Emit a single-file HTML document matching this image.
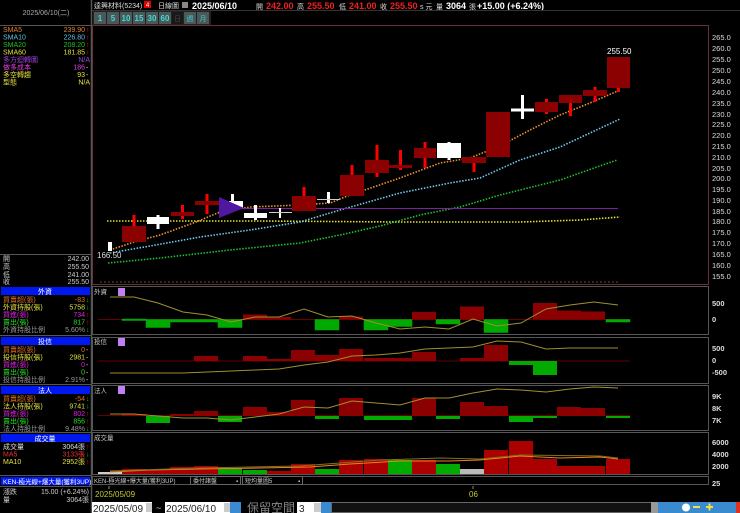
<!DOCTYPE html>
<html><head><meta charset="utf-8"><style>
html,body{margin:0;padding:0;background:#000;width:740px;height:513px;overflow:hidden}
svg{display:block}
text{font-family:"Liberation Sans","Noto Sans CJK TC",sans-serif}
.s{font-size:7px}
.m{font-size:8px;font-weight:bold}
</style></head><body>
<svg width="740" height="513" viewBox="0 0 740 513" xmlns="http://www.w3.org/2000/svg">
<rect width="740" height="513" fill="#000"/>
<!-- left panel borders -->
<line x1="91.5" y1="0" x2="91.5" y2="513" stroke="#555" stroke-width="1.5"/>
<line x1="0" y1="25.5" x2="91" y2="25.5" stroke="#555"/>
<text x="46" y="15" class="s" fill="#aaa" text-anchor="middle">2025/06/10(二)</text>
<g class="s">
<text x="3" y="32" fill="#e08030">SMA5</text><text x="85" y="32" fill="#e08030" text-anchor="end">239.90</text><text x="86" y="32" fill="#f00">↑</text>
<text x="3" y="39.5" fill="#60c0e0">SMA10</text><text x="85" y="39.5" fill="#60c0e0" text-anchor="end">226.80</text><text x="86" y="39.5" fill="#f00">↑</text>
<text x="3" y="47" fill="#20c020">SMA20</text><text x="85" y="47" fill="#20c020" text-anchor="end">208.20</text><text x="86" y="47" fill="#f00">↑</text>
<text x="3" y="54.5" fill="#e0e040">SMA60</text><text x="85" y="54.5" fill="#e0e040" text-anchor="end">181.85</text><text x="86" y="54.5" fill="#f00">↑</text>
<text x="3" y="62" fill="#a040e0">多方迴轉圖</text><text x="90" y="62" fill="#a040e0" text-anchor="end">N/A</text>
<text x="3" y="69.5" fill="#e040e0">做多成本</text><text x="85" y="69.5" fill="#e040e0" text-anchor="end">186</text><text x="86" y="69.5" fill="#ccc">-</text>
<text x="3" y="77" fill="#e0e040">多空轉趨</text><text x="85" y="77" fill="#e0e040" text-anchor="end">93</text><text x="86" y="77" fill="#ccc">-</text>
<text x="3" y="84.5" fill="#e0e040">型態</text><text x="90" y="84.5" fill="#e0e040" text-anchor="end">N/A</text>
</g>
<line x1="0" y1="254.5" x2="91" y2="254.5" stroke="#555"/>
<g class="s" fill="#ccc">
<text x="3" y="261">開</text><text x="89" y="261" text-anchor="end">242.00</text>
<text x="3" y="269">高</text><text x="89" y="269" text-anchor="end">255.50</text>
<text x="3" y="277">低</text><text x="89" y="277" text-anchor="end">241.00</text>
<text x="3" y="284">收</text><text x="89" y="284" text-anchor="end">255.50</text>
</g>
<!-- 外資 -->
<rect x="1" y="287" width="89" height="8" fill="#0018f0"/>
<text x="45" y="294" class="s" fill="#fff" text-anchor="middle">外資</text>
<g class="s">
<text x="3" y="302" fill="#e07020">買賣超(張)</text><text x="85" y="302" fill="#e07020" text-anchor="end">-83</text><text x="86" y="302" fill="#0c0">↓</text>
<text x="3" y="309.5" fill="#e0e040">外資持股(張)</text><text x="85" y="309.5" fill="#e0e040" text-anchor="end">5758</text><text x="86" y="309.5" fill="#0c0">↓</text>
<text x="3" y="317" fill="#e020e0">買進(張)</text><text x="85" y="317" fill="#e020e0" text-anchor="end">734</text><text x="86" y="317" fill="#f00">↑</text>
<text x="3" y="324.5" fill="#20e020">賣出(張)</text><text x="85" y="324.5" fill="#20e020" text-anchor="end">817</text><text x="86" y="324.5" fill="#f00">↑</text>
<text x="3" y="332" fill="#999">外資持股比例</text><text x="85" y="332" fill="#999" text-anchor="end">5.60%</text><text x="86" y="332" fill="#0c0">↓</text>
</g>
<line x1="0" y1="335.5" x2="91" y2="335.5" stroke="#555"/>
<rect x="1" y="337" width="89" height="8" fill="#0018f0"/>
<text x="45" y="344" class="s" fill="#fff" text-anchor="middle">投信</text>
<g class="s">
<text x="3" y="352" fill="#e07020">買賣超(張)</text><text x="85" y="352" fill="#e07020" text-anchor="end">0</text><text x="86" y="352" fill="#ccc">-</text>
<text x="3" y="359.5" fill="#e0e040">投信持股(張)</text><text x="85" y="359.5" fill="#e0e040" text-anchor="end">2981</text><text x="86" y="359.5" fill="#ccc">-</text>
<text x="3" y="367" fill="#e020e0">買進(張)</text><text x="85" y="367" fill="#e020e0" text-anchor="end">0</text><text x="86" y="367" fill="#ccc">-</text>
<text x="3" y="374.5" fill="#20e020">賣出(張)</text><text x="85" y="374.5" fill="#20e020" text-anchor="end">0</text><text x="86" y="374.5" fill="#ccc">-</text>
<text x="3" y="382" fill="#999">投信持股比例</text><text x="85" y="382" fill="#999" text-anchor="end">2.91%</text><text x="86" y="382" fill="#ccc">-</text>
</g>
<line x1="0" y1="384.5" x2="91" y2="384.5" stroke="#555"/>
<rect x="1" y="386" width="89" height="8" fill="#0018f0"/>
<text x="45" y="393" class="s" fill="#fff" text-anchor="middle">法人</text>
<g class="s">
<text x="3" y="401" fill="#e07020">買賣超(張)</text><text x="85" y="401" fill="#e07020" text-anchor="end">-54</text><text x="86" y="401" fill="#0c0">↓</text>
<text x="3" y="408.5" fill="#e0e040">法人持股(張)</text><text x="85" y="408.5" fill="#e0e040" text-anchor="end">9741</text><text x="86" y="408.5" fill="#0c0">↓</text>
<text x="3" y="416" fill="#e020e0">買進(張)</text><text x="85" y="416" fill="#e020e0" text-anchor="end">802</text><text x="86" y="416" fill="#f00">↑</text>
<text x="3" y="423.5" fill="#20e020">賣出(張)</text><text x="85" y="423.5" fill="#20e020" text-anchor="end">856</text><text x="86" y="423.5" fill="#f00">↑</text>
<text x="3" y="431" fill="#999">法人持股比例</text><text x="85" y="431" fill="#999" text-anchor="end">9.48%</text><text x="86" y="431" fill="#0c0">↓</text>
</g>
<line x1="0" y1="432.5" x2="91" y2="432.5" stroke="#555"/>
<rect x="1" y="434" width="89" height="8" fill="#0018f0"/>
<text x="45" y="441" class="s" fill="#fff" text-anchor="middle">成交量</text>
<g class="s">
<text x="3" y="449" fill="#ddd">成交量</text><text x="85" y="449" fill="#ddd" text-anchor="end">3064張</text><text x="86" y="449" fill="#f00">↑</text>
<text x="3" y="456.5" fill="#f03030">MA5</text><text x="85" y="456.5" fill="#f03030" text-anchor="end">3133張</text><text x="86" y="456.5" fill="#0c0">↓</text>
<text x="3" y="464" fill="#e0e040">MA10</text><text x="85" y="464" fill="#e0e040" text-anchor="end">2952張</text><text x="86" y="464" fill="#f00">↑</text>
</g>
<line x1="0" y1="475.5" x2="91" y2="475.5" stroke="#555"/>
<rect x="1" y="477" width="89" height="8" fill="#0018f0"/>
<text x="3" y="484" class="s" fill="#fff" style="font-size:6.5px">KEN-極光線+爆大量(獲利3UP)</text>
<line x1="0" y1="486.5" x2="91" y2="486.5" stroke="#555"/>
<g class="s" fill="#ccc">
<text x="3" y="494">漲跌</text><text x="89" y="494" text-anchor="end">15.00 (+6.24%)</text>
<text x="3" y="502">量</text><text x="89" y="502" text-anchor="end">3064張</text>
</g>

<!-- header -->
<text x="94" y="8" class="s" fill="#ddd">達興材料(5234)</text>
<rect x="144" y="1" width="7" height="7" fill="#e00000"/><text x="147.5" y="7" font-size="6" fill="#fff" text-anchor="middle">4</text>
<text x="158" y="8" class="s" fill="#ddd">日線圖</text>
<rect x="182" y="2" width="6" height="6" fill="#888"/>
<text x="192" y="9" class="m" fill="#fff" style="font-size:9px">2025/06/10</text>
<text x="256" y="9" class="s" fill="#ddd">開</text><text x="266" y="9" class="m" fill="#f02020" style="font-size:9px">242.00</text>
<text x="297" y="9" class="s" fill="#ddd">高</text><text x="307" y="9" class="m" fill="#f02020" style="font-size:9px">255.50</text>
<text x="339" y="9" class="s" fill="#ddd">低</text><text x="349" y="9" class="m" fill="#f02020" style="font-size:9px">241.00</text>
<text x="380" y="9" class="s" fill="#ddd">收</text><text x="390" y="9" class="m" fill="#f02020" style="font-size:9px">255.50</text>
<text x="420" y="9" class="s" fill="#ddd">s 元</text><text x="431" y="9" class="s" fill="#ddd"></text>
<text x="436" y="9" class="s" fill="#ddd">量</text><text x="446" y="9" class="m" fill="#fff" style="font-size:9px">3064</text>
<text x="469" y="9" class="s" fill="#ddd">張</text>
<text x="477" y="9" class="m" fill="#fff" style="font-size:9px">+15.00 (+6.24%)</text>
<line x1="92" y1="10.5" x2="740" y2="10.5" stroke="#333"/>
<g>
<rect x="93" y="11" width="118" height="14" fill="#222"/>
<g fill="#4a5858" stroke="#222">
<rect x="93.5" y="11.5" width="13" height="13"/><rect x="106.5" y="11.5" width="13" height="13"/><rect x="119.5" y="11.5" width="13" height="13"/><rect x="132.5" y="11.5" width="13" height="13"/><rect x="145.5" y="11.5" width="13" height="13"/><rect x="158.5" y="11.5" width="13" height="13"/><rect x="183.5" y="11.5" width="13" height="13"/><rect x="196.5" y="11.5" width="13" height="13"/>
</g>
<rect x="172" y="12" width="11" height="12" fill="#181818"/>
<g class="m" fill="#40d8d8" text-anchor="middle">
<text x="100" y="21">1</text><text x="113" y="21">5</text><text x="126" y="21">10</text><text x="139" y="21">15</text><text x="152" y="21">30</text><text x="165" y="21">60</text>
</g>
<g class="s" fill="#40c8c8" text-anchor="middle"><text x="177.5" y="21" fill="#444">日</text><text x="190" y="21">週</text><text x="203" y="21">月</text></g>
</g>

<!-- main chart frame -->
<rect x="92.5" y="25.5" width="616" height="259" fill="none" stroke="#6a3038"/>
<g class="s" fill="#ddd" style="font-size:7.5px">
<text x="712" y="40">265.0</text><text x="712" y="51">260.0</text><text x="712" y="62">255.0</text><text x="712" y="73">250.0</text><text x="712" y="84">245.0</text><text x="712" y="95">240.0</text><text x="712" y="106">235.0</text><text x="712" y="117">230.0</text><text x="712" y="127">225.0</text><text x="712" y="138">220.0</text><text x="712" y="149">215.0</text><text x="712" y="160">210.0</text><text x="712" y="171">205.0</text><text x="712" y="181">200.0</text><text x="712" y="192">195.0</text><text x="712" y="203">190.0</text><text x="712" y="214">185.0</text><text x="712" y="224">180.0</text><text x="712" y="235">175.0</text><text x="712" y="246">170.0</text><text x="712" y="257">165.0</text><text x="712" y="268">160.0</text><text x="712" y="279">155.0</text>
</g>
<!-- MA lines -->
<g fill="none" stroke-width="1.6" stroke-dasharray="1.5 1.5">
<polyline stroke="#e0e030" points="107,221 260,221 400,222 520,222 580,220 620,217"/>
<polyline stroke="#20c030" points="108,263 160,258 230,250 300,243 340,235 380,226 420,215 460,207 500,195 560,180 617,160"/>
<polyline stroke="#70c8e8" points="110,253 150,246 200,237 250,230 300,222 340,210 400,193 450,183 480,178 520,160 560,147 620,119"/>
<polyline stroke="#f09030" points="110,250 134,242 160,235 196,222 220,212 250,207 300,205 330,203 350,195 400,178 440,163 470,158 500,146 530,130 560,115 590,103 620,90"/>
</g>
<line x1="243" y1="208.5" x2="618" y2="208.5" stroke="#8020a0"/>
<line x1="100" y1="282" x2="620" y2="282" stroke="#6a5020" stroke-dasharray="2 2"/>
<!-- candles -->
<g>
<rect x="108" y="242" width="4" height="9" fill="#fff"/>
<rect x="132.5" y="215" width="3" height="12" fill="#f00"/><rect x="122" y="226" width="24" height="16" fill="#8b0000"/>
<rect x="156.5" y="215" width="3" height="14" fill="#fff"/><rect x="147" y="217" width="22" height="7" fill="#fff"/>
<rect x="181" y="205" width="3" height="14" fill="#f00"/><rect x="171" y="212" width="23" height="4" fill="#8b0000"/>
<rect x="205.5" y="194" width="3" height="20" fill="#f00"/><rect x="195" y="201" width="24" height="4" fill="#8b0000"/>
<rect x="231" y="194" width="3" height="10" fill="#fff"/><rect x="229" y="201" width="14" height="7" fill="#fff"/>
<polygon points="219,197 219,218 244,208" fill="#5018a0"/>
<rect x="254" y="205" width="3" height="15" fill="#fff"/><rect x="244" y="213" width="23" height="5" fill="#fff"/>
<rect x="279" y="208" width="2" height="10" fill="#fff"/><rect x="269" y="212" width="23" height="1" fill="#ccc"/>
<rect x="302.5" y="187" width="3" height="10" fill="#f00"/><rect x="292" y="196" width="24" height="15" fill="#8b0000"/>
<rect x="327" y="192" width="3" height="11" fill="#fff"/><rect x="317" y="199" width="23" height="1" fill="#ccc"/>
<rect x="350.5" y="165" width="3" height="11" fill="#f00"/><rect x="340" y="175" width="24" height="21" fill="#8b0000"/>
<rect x="375.5" y="145" width="3" height="32" fill="#f00"/><rect x="365" y="160" width="24" height="13" fill="#8b0000"/>
<rect x="399" y="150" width="3" height="20" fill="#f00"/><rect x="389" y="165" width="23" height="3" fill="#8b0000"/>
<rect x="423.5" y="142" width="3" height="26" fill="#f00"/><rect x="414" y="148" width="22" height="10" fill="#8b0000"/>
<rect x="447.5" y="142" width="3" height="18" fill="#fff"/><rect x="437" y="143" width="24" height="15" fill="#fff"/>
<rect x="472.5" y="157" width="3" height="15" fill="#f00"/><rect x="462" y="157" width="24" height="6" fill="#8b0000"/>
<rect x="486" y="112" width="24" height="45" fill="#8b0000"/>
<rect x="521" y="95" width="3" height="24" fill="#fff"/><rect x="511" y="108.5" width="23" height="3" fill="#fff"/>
<rect x="545" y="99" width="3" height="15" fill="#f00"/><rect x="535" y="102" width="23" height="10" fill="#8b0000"/>
<rect x="569" y="95" width="3" height="21" fill="#f00"/><rect x="559" y="95" width="23" height="8" fill="#8b0000"/>
<rect x="593.5" y="87" width="3" height="15" fill="#f00"/><rect x="583" y="90" width="24" height="6" fill="#8b0000"/>
<rect x="617" y="57" width="3" height="35" fill="#f00"/><rect x="607" y="57" width="23" height="31" fill="#8b0000"/>
</g>
<text x="607" y="54" class="s" fill="#fff" style="font-size:8px">255.50</text>
<text x="97" y="258" class="s" fill="#ddd" style="font-size:8px">166.50</text>

<!-- sub panels frames -->
<g fill="none" stroke="#555">
<rect x="92.5" y="286.5" width="616" height="48"/>
<rect x="92.5" y="337.5" width="616" height="46"/>
<rect x="92.5" y="385.5" width="616" height="45"/>
<rect x="92.5" y="432.5" width="616" height="42"/>
<rect x="92.5" y="476.5" width="616" height="8"/>
</g>
<g class="s" fill="#ccc" style="font-size:6.5px">
<text x="94" y="294">外資</text><text x="94" y="344">投信</text><text x="94" y="393">法人</text><text x="94" y="440">成交量</text>
</g>
<g fill="#c080f0"><rect x="118" y="288" width="7" height="8"/><rect x="118" y="338" width="7" height="8"/><rect x="118" y="386" width="7" height="8"/></g>
<g class="m" fill="#ddd" style="font-size:7.5px">
<text x="712" y="306">500</text><text x="712" y="322">0</text>
<text x="712" y="351">500</text><text x="712" y="363">0</text><text x="712" y="375">-500</text>
<text x="712" y="399">9K</text><text x="712" y="411">8K</text><text x="712" y="423">7K</text>
<text x="712" y="445">6000</text><text x="712" y="457">4000</text><text x="712" y="469">2000</text>
<text x="712" y="486">25</text>
</g>
<!-- 外資 bars zero 319.5 -->
<line x1="98" y1="319.5" x2="630" y2="319.5" stroke="#600" />
<g stroke="#0a0" fill="#0a0" stroke-width="0.5">
<rect x="122" y="319" width="24" height="1.5"/><rect x="146" y="319.5" width="24" height="8"/><rect x="170" y="319.5" width="24" height="2.5"/><rect x="194" y="319.5" width="24" height="2.5"/><rect x="218" y="319.5" width="24" height="8"/>
<rect x="315" y="319.5" width="24" height="10.5"/><rect x="364" y="319.5" width="24" height="10.5"/><rect x="388" y="319.5" width="24" height="7"/><rect x="436" y="319.5" width="24" height="4.5"/><rect x="484" y="319.5" width="24" height="13"/><rect x="606" y="319.5" width="24" height="2.5"/>
</g>
<g fill="#8b0000">
<rect x="243" y="314.5" width="24" height="5"/><rect x="267" y="317" width="24" height="2.5"/><rect x="339" y="316.5" width="24" height="3"/><rect x="412" y="312" width="24" height="7.5"/><rect x="460" y="306.5" width="24" height="13"/><rect x="533" y="303" width="24" height="16.5"/><rect x="557" y="310.5" width="24" height="9"/><rect x="581" y="311.5" width="24" height="8"/>
</g>
<polyline fill="none" stroke="#a09030" stroke-width="1" points="110,297 134,297 158,303 183,312 207,315 231,322 255,317 279,317 304,309 328,317 352,316 376,323 400,329 425,327 449,329 473,319 497,326 521,323 546,309 570,305 594,302 618,305"/>
<!-- 投信 zero 361 -->
<line x1="98" y1="361" x2="630" y2="361" stroke="#600"/>
<g fill="#8b0000">
<rect x="194" y="356" width="24" height="5"/><rect x="243" y="356" width="24" height="5"/><rect x="267" y="359" width="24" height="2"/><rect x="291" y="350" width="24" height="11"/><rect x="315" y="355" width="24" height="6"/><rect x="339" y="349" width="24" height="12"/><rect x="364" y="358" width="24" height="3"/><rect x="388" y="358" width="24" height="3"/><rect x="412" y="352" width="24" height="9"/><rect x="460" y="358" width="24" height="3"/><rect x="484" y="345" width="24" height="16"/>
</g>
<g fill="#0a0"><rect x="509" y="361" width="24" height="4"/><rect x="533" y="361" width="24" height="14"/></g>
<polyline fill="none" stroke="#a09030" stroke-width="1" points="110,373 134,373 158,373 183,373 207,372 231,371 255,370 279,369 304,365 328,362 352,356 376,355 400,353 425,349 449,348 473,347 497,341 521,342 546,349 570,348 594,348 618,348"/>
<!-- 法人 zero 416 -->
<line x1="98" y1="415.5" x2="630" y2="415.5" stroke="#600"/>
<g fill="#8b0000">
<rect x="122" y="414" width="24" height="2"/><rect x="170" y="414" width="24" height="2"/><rect x="194" y="411" width="24" height="5"/><rect x="243" y="407" width="24" height="9"/><rect x="267" y="412" width="24" height="4"/><rect x="291" y="400" width="24" height="16"/><rect x="339" y="398" width="24" height="18"/><rect x="412" y="398" width="24" height="18"/><rect x="460" y="402" width="24" height="14"/><rect x="484" y="406" width="24" height="10"/><rect x="557" y="407" width="24" height="9"/><rect x="581" y="408" width="24" height="8"/>
</g>
<g fill="#0a0"><rect x="146" y="416" width="24" height="7"/><rect x="218" y="416" width="24" height="6"/><rect x="315" y="416" width="24" height="3"/><rect x="364" y="416" width="24" height="4"/><rect x="388" y="416" width="24" height="4"/><rect x="436" y="416" width="24" height="3"/><rect x="509" y="416" width="24" height="6"/><rect x="533" y="416" width="24" height="2"/><rect x="606" y="416" width="24" height="2"/></g>
<polyline fill="none" stroke="#a09030" stroke-width="1" points="110,414 134,414 158,416 183,418 207,418 231,420 255,417 279,414 304,407 328,408 352,401 376,403 400,405 425,398 449,398 473,393 497,389 521,390 546,392 570,389 594,387 618,388"/>
<!-- volume -->
<g>
<rect x="98" y="472" width="24" height="2" fill="#ccc"/>
<rect x="122" y="469" width="24" height="5" fill="#a00"/><rect x="146" y="470" width="24" height="4" fill="#a00"/><rect x="170" y="467" width="24" height="7" fill="#a00"/><rect x="194" y="466" width="24" height="8" fill="#a00"/>
<rect x="218" y="468" width="24" height="6" fill="#0a0"/><rect x="243" y="470" width="24" height="4" fill="#0a0"/>
<rect x="267" y="471" width="24" height="3" fill="#a00"/><rect x="291" y="464" width="24" height="10" fill="#a00"/>
<rect x="315" y="469" width="24" height="5" fill="#0a0"/>
<rect x="339" y="460" width="24" height="14" fill="#a00"/><rect x="364" y="459" width="24" height="15" fill="#a00"/>
<rect x="388" y="460" width="24" height="14" fill="#0a0"/>
<rect x="412" y="460" width="24" height="14" fill="#a00"/>
<rect x="436" y="464" width="24" height="10" fill="#0a0"/>
<rect x="460" y="469" width="24" height="5" fill="#bbb"/>
<rect x="484" y="450" width="24" height="24" fill="#a00"/><rect x="509" y="441" width="24" height="33" fill="#a00"/><rect x="533" y="459" width="24" height="15" fill="#a00"/><rect x="557" y="466" width="24" height="8" fill="#a00"/><rect x="581" y="466" width="24" height="8" fill="#a00"/><rect x="606" y="459" width="24" height="15" fill="#a00"/>
</g>
<polyline fill="none" stroke="#f08020" stroke-width="1" points="110,472 150,470 200,469 260,468 310,467 350,464 400,461 450,461 480,460 520,456 560,458 600,457 618,459"/>
<polyline fill="none" stroke="#807020" stroke-width="1" points="110,471 200,468 300,466 380,460 440,458 480,459 520,455 600,456 618,458"/>
<!-- bottom strip -->
<g class="s" fill="#ccc" style="font-size:6px">
<text x="94" y="483">KEN-極光線+爆大量(獲利3UP)</text>
<rect x="190.5" y="476.5" width="50" height="8" fill="none" stroke="#666"/><text x="193" y="483">委付諸盤</text><text x="236" y="483">▪</text>
<rect x="242.5" y="476.5" width="60" height="8" fill="none" stroke="#666"/><text x="245" y="483">短均量圖5</text><text x="298" y="483">▪</text>
</g>
<line x1="109" y1="486" x2="109" y2="489" stroke="#888"/><line x1="473" y1="486" x2="473" y2="489" stroke="#888"/>
<text x="95" y="497" font-size="8" fill="#c8c830">2025/05/09</text>
<text x="469" y="497" font-size="8" fill="#c8c830">06</text>
<!-- bottom controls -->
<rect x="92" y="502" width="60" height="11" fill="#fff"/><text x="93" y="512" font-size="10" fill="#222" font-family="Liberation Serif">2025/05/09</text>
<rect x="146" y="503" width="6" height="9" fill="#ccc"/>
<text x="156" y="511" font-size="9" fill="#ccc">~</text>
<rect x="165" y="502" width="65" height="11" fill="#fff"/><text x="166" y="512" font-size="10" fill="#222">2025/06/10</text>
<rect x="224" y="503" width="6" height="9" fill="#ccc"/>
<rect x="230" y="502" width="11" height="11" fill="#3a8ad0"/>
<text x="247" y="512" font-size="12" fill="#888">保留空間</text>
<rect x="297" y="502" width="24" height="11" fill="#fff"/><text x="299" y="512" font-size="10" fill="#222">3</text>
<rect x="314" y="503" width="7" height="9" fill="#ccc"/>
<rect x="321" y="502" width="10" height="11" fill="#3a8ad0"/>
<rect x="331.5" y="502.5" width="321" height="10" fill="#111" stroke="#666"/>
<rect x="651" y="502" width="7" height="11" fill="#999"/>
<rect x="658" y="502" width="82" height="11" fill="#3a8ad0"/>
<g fill="#e0f0ff"><circle cx="686" cy="507.5" r="4" fill="#fff"/><rect x="693" y="506" width="7" height="2" fill="#f0e040"/><rect x="706" y="506" width="7" height="2" fill="#f0e040"/><rect x="708.5" y="503.5" width="2" height="7" fill="#f0e040"/></g>
<rect x="736" y="502" width="4" height="11" fill="#e03020"/>
</svg>
</body></html>
